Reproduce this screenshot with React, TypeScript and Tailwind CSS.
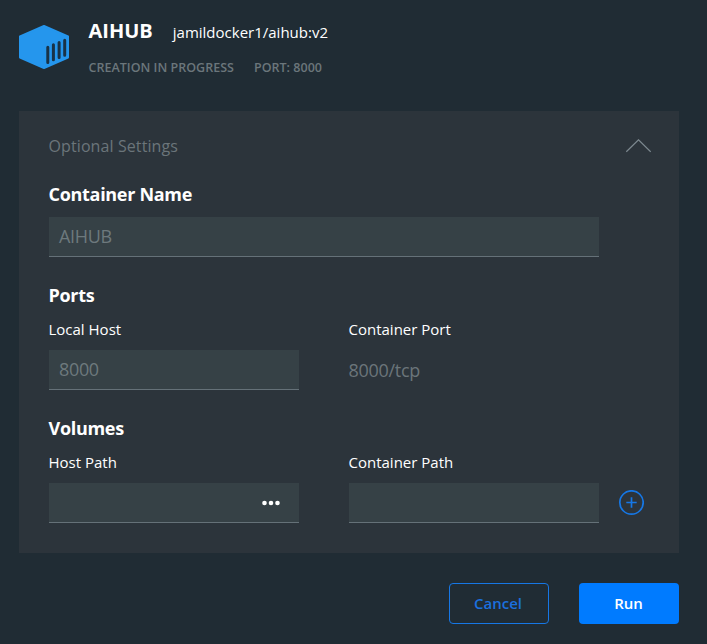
import type { ReactNode } from "react";

function ContainerLogo() {
  return (
    <svg className="block h-[46px] w-[52px]" viewBox="0 0 52 46" fill="none">
      <path
        d="M26 2.4 L50 12.8 V34 L26 44.4 L2 34 V12.8 Z"
        fill="#2596ed"
        stroke="#2596ed"
        strokeWidth="2"
        strokeLinejoin="round"
        transform="translate(0 -0.4)"
      />
      <path
        d="M29.8 23.3V38.4M35.4 20.8V35.8M41.1 18.4V33.4M46.7 16.2V31.2"
        stroke="#193246"
        strokeWidth="3"
        strokeLinecap="round"
      />
    </svg>
  );
}

function Heading({ children }: { children: ReactNode }) {
  return <h2 className="-ml-[0.5px] h-6 text-lg leading-6 font-bold tracking-[-0.3px]">{children}</h2>;
}

function Label({ children }: { children: ReactNode }) {
  return <div className="-ml-[0.5px] h-5 text-[15px] leading-5">{children}</div>;
}

function Field({ children }: { children?: ReactNode }) {
  return (
    <div className="flex h-10 items-center border-b border-[#657178] bg-[#364146] px-2.5 pb-0.5 text-lg leading-6 tracking-[-0.35px] text-[#6d797d]">
      {children}
    </div>
  );
}

export default function App() {
  return (
    <main className="h-[644px] w-[707px] overflow-hidden bg-[#202c34] pr-7 pl-[19px] font-['Open_Sans',sans-serif] whitespace-nowrap text-white">
      <header className="flex h-[111px]">
        <div className="-ml-px pt-6">
          <ContainerLogo />
        </div>
        <div className="ml-[18.5px] pt-[17px]">
          <div className="flex h-7 items-center">
            <h1 className="text-xl leading-7 font-bold">AIHUB</h1>
            <span className="ml-5 pt-0.5 text-[15px] leading-6">jamildocker1/aihub:v2</span>
          </div>
          <div className="mt-[13px] flex h-5 gap-5 text-[12.5px] leading-5 font-semibold tracking-[0.02px] text-[#6b767b]">
            <span>CREATION IN PROGRESS</span>
            <span>PORT: 8000</span>
          </div>
        </div>
      </header>

      <section className="h-[442px] bg-[#2c343b] pr-7 pl-[30px]">
        <div className="flex h-[71px] justify-between">
          <span className="-ml-[0.5px] pt-[23px] text-base leading-6 tracking-[0.1px] text-[#6b757a]">Optional Settings</span>
          <svg className="mt-7 block h-[15px] w-[26px]" viewBox="0 0 26 15" fill="none">
            <path d="M1.3 12.8 13.5 0.8 25.7 12.8" stroke="#7d8990" strokeWidth="1.2" />
          </svg>
        </div>

        <div className="w-[550px]">
          <Heading>Container Name</Heading>
          <div className="mt-[11px]">
            <Field>AIHUB</Field>
          </div>
        </div>

        <div className="mt-[26px]">
          <Heading>Ports</Heading>
          <div className="mt-3 grid grid-cols-[250px_250px] gap-x-[50px]">
            <div>
              <Label>Local Host</Label>
              <div className="mt-[11px]">
                <Field>8000</Field>
              </div>
            </div>
            <div>
              <Label>Container Port</Label>
              <div className="mt-[11px] -ml-[0.5px] flex h-10 items-center text-lg leading-6 tracking-[-0.3px] text-[#6b757a]">8000/tcp</div>
            </div>
          </div>
        </div>

        <div className="mt-[26px]">
          <Heading>Volumes</Heading>
          <div className="mt-3 grid grid-cols-[250px_250px_26px] gap-x-[50px]">
            <div>
              <Label>Host Path</Label>
              <div className="mt-[11px]">
                <Field>
                  <svg className="mt-0.5 mr-2 ml-auto h-[6px] w-[20px]" viewBox="0 0 20 6" fill="white">
                    <circle cx="3.5" cy="3" r="2.3" />
                    <circle cx="10" cy="3" r="2.3" />
                    <circle cx="16.5" cy="3" r="2.3" />
                  </svg>
                </Field>
              </div>
            </div>
            <div>
              <Label>Container Path</Label>
              <div className="mt-[11px]">
                <Field />
              </div>
            </div>
            <button className="-ml-[31px] mt-[38px] size-[26px]" aria-label="Add volume">
              <svg className="block" width="26" height="26" viewBox="0 0 26 26" fill="none" stroke="#1677e5">
                <circle cx="13.5" cy="12.5" r="11.7" strokeWidth="1.7" />
                <path d="M8.3 12.5H18.7M13.5 7.3V17.7" strokeWidth="1.7" />
              </svg>
            </button>
          </div>
        </div>
      </section>

      <footer className="mt-[30px] flex justify-end gap-[30px] text-[15px] font-semibold">
        <button className="h-[41px] w-[100px] rounded border border-[#1677e5] pr-0.5 text-[#1b70df]">Cancel</button>
        <button className="h-[41px] w-[100px] rounded bg-[#007bff] pr-px">Run</button>
      </footer>
    </main>
  );
}
